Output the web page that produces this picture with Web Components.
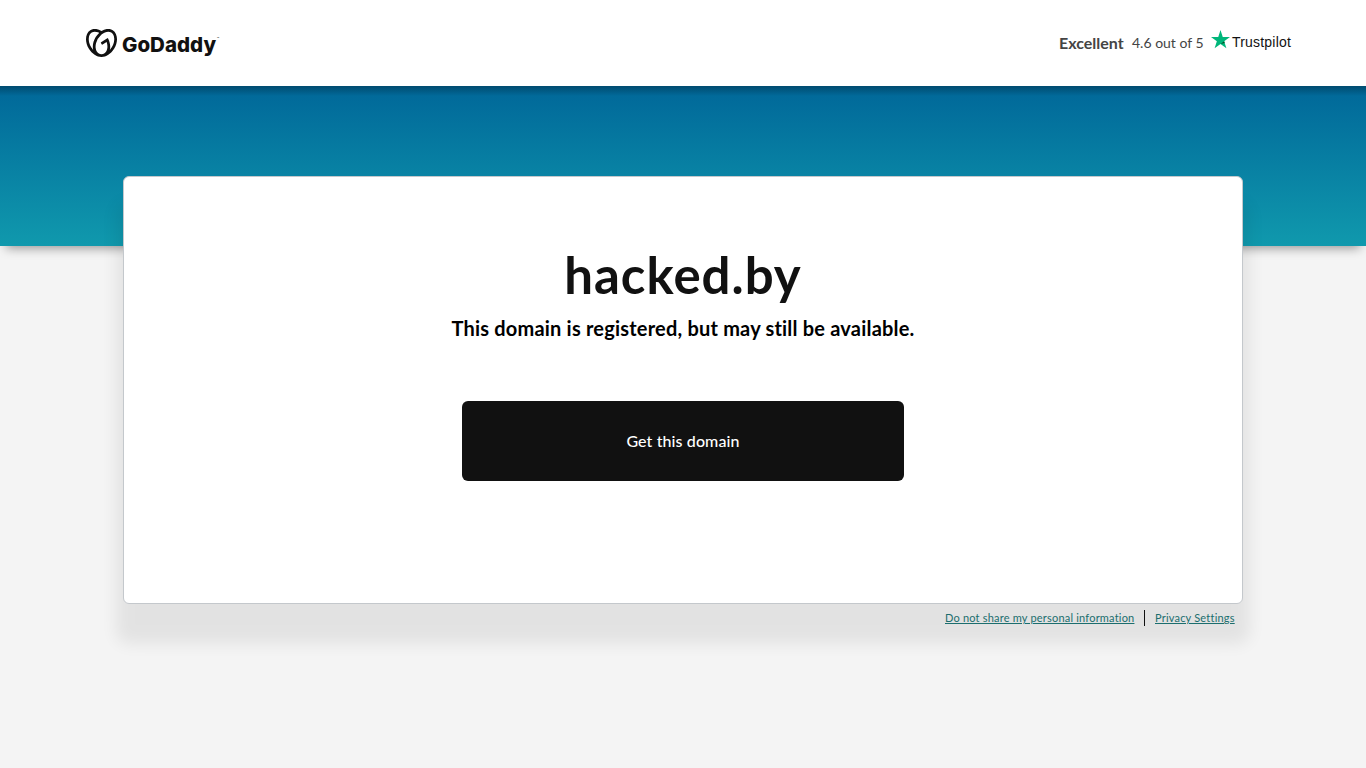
<!DOCTYPE html>
<html lang="en">
<head>
<meta charset="utf-8">
<title>hacked.by</title>
<style>
body{
    margin: 0;
    min-height: 768px;
    background-color: #f4f4f4;
    font-family: Lato, "Liberation Sans", sans-serif;
    color: #111;
}
</style>
</head>
<body>
<page-header>
    <brand-logo slot="brand"></brand-logo>
    <trust-rating slot="rating"></trust-rating>
</page-header>
<hero-banner></hero-banner>
<domain-card>
    <span slot="name">hacked.by</span>
    <span slot="message">This domain is registered, but may still be available.</span>
    <span slot="action">Get this domain</span>
</domain-card>
<page-footer></page-footer>
<script>
class PageHeader extends HTMLElement{
    constructor(){
        super();
        this.attachShadow({mode: "open"}).innerHTML = `
        <style>
        :host{
            display: flex;
            justify-content: space-between;
            box-sizing: border-box;
            height: 86px;
            padding: 29px 75px 0 86px;
            background-color: white;
        }
        </style>
        <slot name="brand"></slot>
        <slot name="rating"></slot>`;
    }
}

class BrandLogo extends HTMLElement{
    constructor(){
        super();
        this.attachShadow({mode: "open"}).innerHTML = `
        <style>
        :host{
            display: flex;
            height: 28px;
        }
        svg{
            width: 31px;
            height: 28px;
        }
        .word{
            width: 95px;
            margin-left: 5px;
            font-family: Inter, sans-serif;
            font-size: 20.5px;
            font-weight: 800;
            line-height: 31px;
            letter-spacing: 0;
        }
        sup{
            margin-top: 7px;
            font-size: 3px;
            line-height: 4px;
        }
        </style>
        <svg viewBox="0 1.4 24 21.3" preserveAspectRatio="none" fill="#111">
            <path d="M20.702 2.29c-2.494-1.554-5.778-1.187-8.706.654C9.076 1.104 5.79.736 3.3 2.29c-3.941 2.463-4.42 8.806-1.07 14.167 2.47 3.954 6.333 6.269 9.77 6.226 3.439.043 7.301-2.273 9.771-6.226 3.347-5.361 2.872-11.704-1.069-14.167zM4.042 15.328a12.838 12.838 0 01-1.546-3.541 10.12 10.12 0 01-.336-3.338c.15-1.98.956-3.524 2.27-4.345 1.315-.822 3.052-.87 4.903-.137.281.113.556.24.825.382A15.11 15.11 0 007.5 7.54c-2.035 3.255-2.655 6.878-1.945 9.765a13.247 13.247 0 01-1.514-1.98zm17.465-3.541a12.866 12.866 0 01-1.547 3.54 13.25 13.25 0 01-1.513 1.984c.635-2.589.203-5.76-1.353-8.734a.39.39 0 00-.563-.153l-4.852 3.032a.397.397 0 00-.126.546l.712 1.139a.395.395 0 00.547.126l3.145-1.965c.101.306.203.606.28.916.296 1.086.41 2.214.335 3.337-.15 1.982-.956 3.525-2.27 4.347a4.437 4.437 0 01-2.25.65h-.101a4.432 4.432 0 01-2.25-.65c-1.314-.822-2.121-2.365-2.27-4.347-.074-1.123.039-2.251.335-3.337a13.212 13.212 0 014.05-6.482 10.148 10.148 0 012.849-1.765c1.845-.733 3.586-.685 4.9.137 1.316.822 2.122 2.365 2.271 4.345a10.146 10.146 0 01-.33 3.334z"/>
        </svg>
        <span class="word">GoDaddy</span><sup>™</sup>`;
    }
}

class TrustRating extends HTMLElement{
    constructor(){
        super();
        this.attachShadow({mode: "open"}).innerHTML = `
        <style>
        :host{
            display: flex;
            height: 28px;
            line-height: 28px;
            color: #444;
        }
        .word{
            width: 65px;
            margin-right: 8px;
            font-size: 16px;
            font-weight: 700;
            white-space: nowrap;
        }
        .score{
            width: 71px;
            margin-right: 8px;
            font-size: 14px;
            white-space: nowrap;
        }
        svg{
            width: 19px;
            height: 19px;
            margin-top: 1px;
        }
        .name{
            width: 59px;
            margin-left: 2px;
            font-family: "Liberation Sans", sans-serif;
            font-size: 14px;
            line-height: 27px;
            letter-spacing: .2px;
            color: #111;
        }
        </style>
        <span class="word">Excellent</span>
        <span class="score">4.6 out of 5</span>
        <svg viewBox="0 0 19 19">
            <path fill="#00b67a" d="M9.5 0l2.25 7H19l-5.85 4.3L15.4 18.2 9.5 13.9 3.6 18.2l2.25-6.9L0 7h7.25z"/>
            <path fill="#005128" d="M13.7 12.9l-.5-1.6-3.7 2.6z"/>
        </svg>
        <span class="name">Trustpilot</span>`;
    }
}

class HeroBanner extends HTMLElement{
    constructor(){
        super();
        this.attachShadow({mode: "open"}).innerHTML = `
        <style>
        :host{
            display: block;
            height: 160px;
            background: linear-gradient(rgba(0,0,0,.27), rgba(0,0,0,0) 10px), linear-gradient(#006799, #1099ad);
            box-shadow: 0 8px 10px -6px rgba(0,0,0,.4);
        }
        </style>`;
    }
}

class DomainCard extends HTMLElement{
    constructor(){
        super();
        this.attachShadow({mode: "open"}).innerHTML = `
        <style>
        :host{
            display: flex;
            flex-direction: column;
            align-items: center;
            position: relative;
            box-sizing: border-box;
            width: 1120px;
            height: 428px;
            margin: -70px auto 0;
            padding-top: 65px;
            border: 1px solid #c4c8cc;
            border-radius: 6px;
            background-color: white;
            box-shadow: 0 33px 16px 7px rgba(0,0,0,.07);
        }
        h1{
            margin: 0;
            font-size: 51px;
            font-weight: 700;
            line-height: 66px;
            letter-spacing: 1px;
        }
        p{
            margin: 6px 0 0;
            font-size: 20px;
            font-weight: 700;
            line-height: 28px;
            letter-spacing: .2px;
            color: black;
        }
        button{
            width: 442px;
            height: 80px;
            margin-top: 59px;
            padding: 0 0 2px;
            border: 0;
            border-radius: 6px;
            background-color: #111;
            color: white;
            font-family: inherit;
            font-size: 16px;
            font-weight: 500;
            letter-spacing: .1px;
        }
        </style>
        <h1><slot name="name"></slot></h1>
        <p><slot name="message"></slot></p>
        <button><slot name="action"></slot></button>`;
    }
}

class PageFooter extends HTMLElement{
    constructor(){
        super();
        this.attachShadow({mode: "open"}).innerHTML = `
        <style>
        :host{
            display: flex;
            justify-content: flex-end;
            position: relative;
            box-sizing: border-box;
            width: 1120px;
            margin: 0 auto;
            padding: 6px 8px 0 0;
            font-size: 11px;
            line-height: 16px;
            letter-spacing: .2px;
        }
        a{
            color: #1b6e6e;
            text-decoration: underline;
            white-space: nowrap;
        }
        .share{
            width: 189px;
            margin-right: 10px;
        }
        .privacy{
            width: 80px;
            padding-left: 10px;
            border-left: 1px solid #111;
        }
        </style>
        <a class="share">Do not share my personal information</a>
        <a class="privacy">Privacy Settings</a>`;
    }
}

customElements.define("page-header", PageHeader);
customElements.define("brand-logo", BrandLogo);
customElements.define("trust-rating", TrustRating);
customElements.define("hero-banner", HeroBanner);
customElements.define("domain-card", DomainCard);
customElements.define("page-footer", PageFooter);
</script>
</body>
</html>
